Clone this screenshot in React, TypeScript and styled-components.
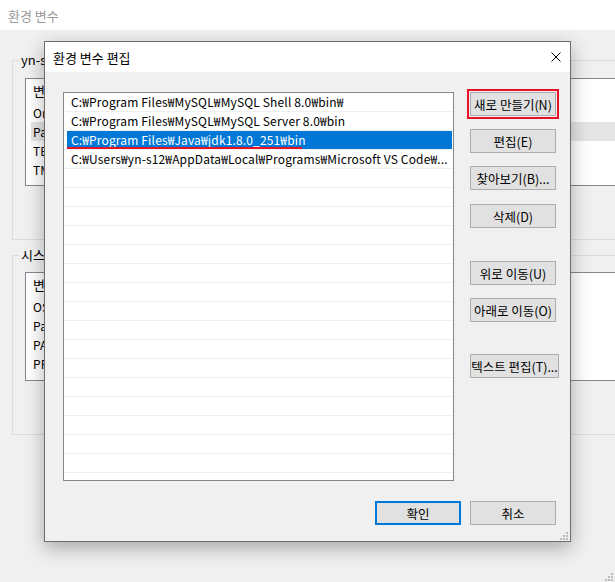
import React from "react";
import styled, { createGlobalStyle } from "styled-components";

const Global = createGlobalStyle`
  html, body { margin: 0; padding: 0; }
  body {
    background: #f0f0f0;
    font-family: "Noto Sans CJK KR", "Noto Sans", sans-serif;
  }
`;

const FONT = `"Noto Sans CJK KR", "Noto Sans", sans-serif`;

const Screen = styled.div`
  position: relative;
  width: 615px;
  height: 582px;
  overflow: hidden;
  background: #f0f0f0;
  font-family: ${FONT};
  font-size: 12px;
  color: #000;
`;

const BgTitleBar = styled.div`
  height: 30px;
  background: #fff;
  color: #999;
  font-size: 13px;
  padding-left: 8px;
  display: flex;
  align-items: center;
`;

const BgBody = styled.div`
  padding: 22px 0 0 12px;
  display: flex;
  flex-direction: column;
  gap: 7px;
`;

const GroupBox = styled.fieldset`
  margin: 0;
  padding: 0;
  width: 700px;
  height: 188px;
  box-sizing: border-box;
  border: 1px solid #dcdcdc;
  min-width: 0;
`;

const Legend = styled.legend`
  margin-left: 6px;
  padding: 0 2px;
  line-height: 16px;
  font-size: 13px;
`;

const BgList = styled.div<{ $top: number; $h: number }>`
  margin: ${(p) => p.$top}px 0 0 12px;
  height: ${(p) => p.$h}px;
  box-sizing: border-box;
  border: 1px solid #828790;
  background: #fff;
  overflow: hidden;
  letter-spacing: 0.15px;
`;

const BgHeader = styled.div`
  height: 24px;
  line-height: 24px;
  padding-left: 7px;
  font-size: 13px;
`;

const BgRow = styled.div<{ $sel?: boolean }>`
  height: 19px;
  line-height: 19px;
  margin-left: 5px;
  padding-left: 2px;
  background: ${(p) => (p.$sel ? "#e5e5e5" : "transparent")};
  white-space: nowrap;
`;

const Dialog = styled.div`
  position: absolute;
  left: 44px;
  top: 41px;
  width: 527px;
  height: 501px;
  box-sizing: border-box;
  border: 1px solid #6e6e6e;
  background: #f0f0f0;
  box-shadow: 0 6px 18px rgba(0, 0, 0, 0.3);
  display: flex;
  flex-direction: column;
`;

const DialogTitleBar = styled.div`
  height: 30px;
  flex: none;
  background: #fff;
  font-size: 13px;
  display: flex;
  align-items: center;
  justify-content: space-between;
  padding: 0 9px 0 8px;
`;

const DialogBody = styled.div`
  padding: 20px 13px 16px 18px;
  display: grid;
  grid-template-columns: 391px 86px;
  grid-template-rows: 389px 24px;
  column-gap: 16px;
  row-gap: 20px;
`;

const PathList = styled.div`
  box-sizing: border-box;
  border: 1px solid #828790;
  background: #fff;
  overflow: hidden;
  letter-spacing: 0.15px;
`;

const PathRow = styled.div`
  height: 19px;
  box-sizing: border-box;
  border-bottom: 1px solid #f0f0f0;
  padding: 0 1px 0 3px;
  display: flex;
`;

const PathCell = styled.div<{ $sel?: boolean }>`
  position: relative;
  flex: 1;
  min-width: 0;
  padding-left: 4px;
  line-height: 18px;
  white-space: nowrap;
  overflow: hidden;
  background: ${(p) => (p.$sel ? "#0078d7" : "transparent")};
  color: ${(p) => (p.$sel ? "#fff" : "#000")};
`;

const RedUnderline = styled.span`
  position: absolute;
  left: 0;
  bottom: 0;
  width: 235px;
  height: 2px;
  background: #e81123;
`;

const ButtonColumn = styled.div`
  display: flex;
  flex-direction: column;
  align-items: flex-start;
`;

const Button = styled.button<{
  $w?: number;
  $mt?: number;
  $default?: boolean;
  $flagged?: boolean;
}>`
  width: ${(p) => p.$w ?? 86}px;
  height: 24px;
  margin-top: ${(p) => p.$mt ?? 0}px;
  box-sizing: border-box;
  flex: none;
  padding: 0;
  font-family: ${FONT};
  font-size: 12.5px;
  color: #000;
  background: #e1e1e1;
  border: ${(p) => (p.$default ? "2px solid #0078d7" : "1px solid #adadad")};
  outline: ${(p) => (p.$flagged ? "2px solid #e81123" : "none")};
  outline-offset: 1px;
  white-space: nowrap;
`;

const Footer = styled.div`
  grid-column: 1 / span 2;
  display: flex;
  justify-content: flex-end;
  gap: 9px;
`;

const Grip = styled.svg<{ $r: number; $b: number }>`
  position: absolute;
  right: ${(p) => p.$r}px;
  bottom: ${(p) => p.$b}px;
`;

const Gripper = ({ r, b }: { r: number; b: number }) => (
  <Grip $r={r} $b={b} width="8" height="8" viewBox="0 0 8 8">
    {[
      [6, 0],
      [3, 3],
      [6, 3],
      [0, 6],
      [3, 6],
      [6, 6],
    ].map(([x, y]) => (
      <rect key={`${x}-${y}`} x={x} y={y} width="2" height="2" fill="#bcbcbc" />
    ))}
  </Grip>
);

const CloseIcon = () => (
  <svg width="10" height="10" viewBox="0 0 10 10">
    <path d="M0.5 0.5 L9.5 9.5 M9.5 0.5 L0.5 9.5" stroke="#000" strokeWidth="1" fill="none" />
  </svg>
);

const paths = [
  "C:₩Program Files₩MySQL₩MySQL Shell 8.0₩bin₩",
  "C:₩Program Files₩MySQL₩MySQL Server 8.0₩bin",
  "C:₩Program Files₩Java₩jdk1.8.0_251₩bin",
  "C:₩Users₩yn-s12₩AppData₩Local₩Programs₩Microsoft VS Code₩...",
];

const TOTAL_ROWS = 21;

export default function App() {
  const rows = Array.from({ length: TOTAL_ROWS }, (_, i) => paths[i] ?? "");
  return (
    <>
      <Global />
      <Screen>
        <BgTitleBar>환경 변수</BgTitleBar>
        <BgBody>
          <GroupBox>
            <Legend>yn-s12에 대한 사용자 변수(U)</Legend>
            <BgList $top={10} $h={108}>
              <BgHeader>변수</BgHeader>
              <BgRow>OneDrive</BgRow>
              <BgRow $sel>Path</BgRow>
              <BgRow>TEMP</BgRow>
              <BgRow>TMP</BgRow>
            </BgList>
          </GroupBox>
          <GroupBox>
            <Legend>시스템 변수(S)</Legend>
            <BgList $top={9} $h={109}>
              <BgHeader>변수</BgHeader>
              <BgRow>OS</BgRow>
              <BgRow>Path</BgRow>
              <BgRow>PATHEXT</BgRow>
              <BgRow>PROCESSOR_ARCHITECTURE</BgRow>
            </BgList>
          </GroupBox>
        </BgBody>
        <Gripper r={2} b={1} />

        <Dialog>
          <DialogTitleBar>
            <span>환경 변수 편집</span>
            <CloseIcon />
          </DialogTitleBar>
          <DialogBody>
            <PathList>
              {rows.map((p, i) => (
                <PathRow key={i}>
                  <PathCell $sel={i === 2}>
                    {p}
                    {i === 2 && <RedUnderline />}
                  </PathCell>
                </PathRow>
              ))}
            </PathList>
            <ButtonColumn>
              <Button $flagged>새로 만들기(N)</Button>
              <Button $mt={13}>편집(E)</Button>
              <Button $mt={13}>찾아보기(B)...</Button>
              <Button $mt={14}>삭제(D)</Button>
              <Button $mt={33}>위로 이동(U)</Button>
              <Button $mt={13}>아래로 이동(O)</Button>
              <Button $mt={32} $w={89}>텍스트 편집(T)...</Button>
            </ButtonColumn>
            <Footer>
              <Button $default>확인</Button>
              <Button>취소</Button>
            </Footer>
          </DialogBody>
          <Gripper r={2} b={1} />
        </Dialog>
      </Screen>
    </>
  );
}
